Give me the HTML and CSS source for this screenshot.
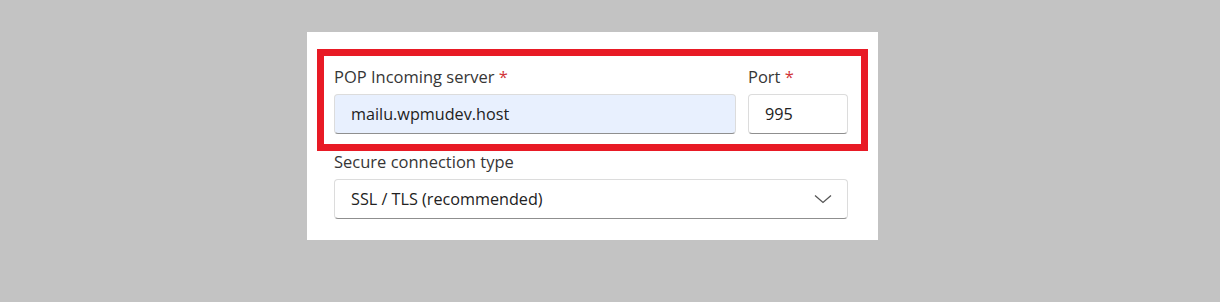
FILE: index.html
```html
<!DOCTYPE html>
<html lang="en">
<head>
<meta charset="utf-8">
<title>POP settings</title>
<link rel="stylesheet" href="styles.css">
</head>
<body>
<div class="panel">
  <div class="highlight">
    <div class="row">
      <div class="field field-server">
        <label class="label">POP Incoming server <span class="req">*</span></label>
        <div class="input input-autofill">mailu.wpmudev.host</div>
      </div>
      <div class="field field-port">
        <label class="label">Port <span class="req">*</span></label>
        <div class="input">995</div>
      </div>
    </div>
  </div>
  <div class="field field-secure">
    <label class="label">Secure connection type</label>
    <div class="input select">
      <span>SSL / TLS (recommended)</span>
      <svg class="chevron" width="18" height="10" viewBox="0 0 18 10"><path d="M1 1.5 L9 8.5 L17 1.5" fill="none" stroke="#555" stroke-width="1.3"/></svg>
    </div>
  </div>
</div>
</body>
</html>
```
FILE: styles.css
```css
html, body {
  margin: 0;
  padding: 0;
}
body {
  background: #c3c3c3;
  height: 302px;
  padding-top: 32px;
  box-sizing: border-box;
  font-family: "Open Sans", "Noto Sans", sans-serif;
  color: #333;
}
.panel {
  margin-left: 307px;
  width: 571px;
  height: 208px;
  background: #fff;
  box-sizing: border-box;
  padding-top: 17px;
}
.highlight {
  margin-left: 10px;
  width: 551px;
  height: 102px;
  box-sizing: border-box;
  border: 7px solid #e81a25;
  padding: 10px 0 0 10px;
}
.row {
  display: flex;
  gap: 12px;
}
.field {
  display: flex;
  flex-direction: column;
  gap: 6px;
}
.field-server { width: 402px; }
.field-port { width: 100px; }
.field-secure {
  margin-left: 27px;
  width: 514px;
}
.label {
  font-size: 16.5px;
  line-height: 22px;
  color: #363636;
}
.req { color: #d13438; }
.input {
  height: 40px;
  box-sizing: border-box;
  border: 1px solid #dcdcdc;
  border-bottom-color: #8f8f8f;
  border-radius: 4px;
  background: #fff;
  padding: 0 16px;
  font-size: 16.2px;
  display: flex;
  align-items: center;
  color: #222;
}
.input-autofill {
  background: #e8f0fe;
}
.select {
  justify-content: space-between;
  padding-right: 15px;
}
.chevron { display: block; }
```
